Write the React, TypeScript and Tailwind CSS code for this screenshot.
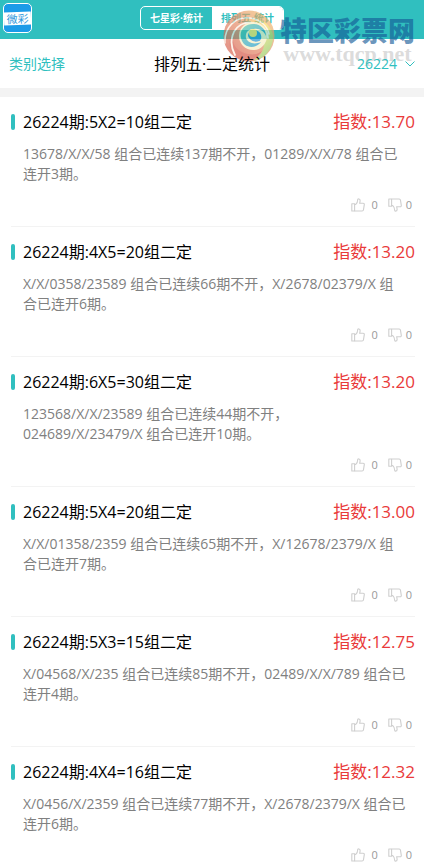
const plans = [
  { title: '26224期:5X2=10组二定', index: '13.70', lines: ['13678/X/X/58 组合已连续137期不开，01289/X/X/78 组合已', '连开3期。'] },
  { title: '26224期:4X5=20组二定', index: '13.20', lines: ['X/X/0358/23589 组合已连续66期不开，X/2678/02379/X 组', '合已连开6期。'] },
  { title: '26224期:6X5=30组二定', index: '13.20', lines: ['123568/X/X/23589 组合已连续44期不开，', '024689/X/23479/X 组合已连开10期。'] },
  { title: '26224期:5X4=20组二定', index: '13.00', lines: ['X/X/01358/2359 组合已连续65期不开，X/12678/2379/X 组', '合已连开7期。'] },
  { title: '26224期:5X3=15组二定', index: '12.75', lines: ['X/04568/X/235 组合已连续85期不开，02489/X/X/789 组合已', '连开4期。'] },
  { title: '26224期:4X4=16组二定', index: '12.32', lines: ['X/0456/X/2359 组合已连续77期不开，X/2678/2379/X 组合已', '连开6期。'] },
];

function ThumbUp() {
  return (
    <svg viewBox="0 0 14 14" className="h-3.5 w-3.5" fill="none" stroke="#cfcfcf" strokeWidth="1.1" strokeLinejoin="round">
      <path d="M.8 5.800h2.800v7.200H.8z" />
      <path d="M3.600 6.400h1.200C6 5.500 6.600 4 6.700 1.700c0-1.100 2.300-1.200 2.400.7 0 1.100-.2 2-.5 2.900h3.500c.9 0 1.300.6 1.200 1.300l-.8 5.100c-.1.800-.6 1.300-1.400 1.300H3.600" />
    </svg>
  );
}

function ThumbDown() {
  return (
    <svg viewBox="0 0 14 14" className="h-3.5 w-3.5" fill="none" stroke="#cfcfcf" strokeWidth="1.1" strokeLinejoin="round">
      <path d="M.8 8.200h2.800V1H.8z" />
      <path d="M3.600 7.600h1.200c1.200.9 1.800 2.400 1.900 4.700 0 1.100 2.300 1.200 2.400-.7 0-1.100-.2-2-.5-2.900h3.500c.9 0 1.300-.6 1.200-1.300l-.8-5.100C12.400 1.500 11.900 1 11.100 1H3.600" />
    </svg>
  );
}

function AppLogo() {
  return (
    <a
      href="#home"
      className="flex h-[30px] w-[29px] flex-col justify-center overflow-hidden rounded-[5px] border border-white bg-[#1b9be8]"
    >
      <span className="-rotate-2 bg-white text-center text-[11px] leading-[13px] text-[#2d97dc]">微彩</span>
    </a>
  );
}

function Swirl() {
  return (
    <svg viewBox="0 0 52 52" className="h-[52px] w-[52px] opacity-65">
      <defs>
        <linearGradient id="swirl-base" x1="1" y1="0" x2="0" y2="1">
          <stop offset="0" stopColor="#f3c76a" />
          <stop offset=".45" stopColor="#e58a60" />
          <stop offset="1" stopColor="#d04a40" />
        </linearGradient>
        <linearGradient id="swirl-gold" x1="0" y1="0" x2=".6" y2="1">
          <stop offset="0" stopColor="#ee9a5c" />
          <stop offset=".45" stopColor="#f8da5a" />
          <stop offset="1" stopColor="#8cc860" />
        </linearGradient>
        <linearGradient id="swirl-core" x1="0" y1="0" x2="1" y2="1">
          <stop offset="0" stopColor="#4fc09a" />
          <stop offset="1" stopColor="#0f8fd0" />
        </linearGradient>
      </defs>
      <circle cx="26" cy="26" r="25.500" fill="url(#swirl-base)" />
      {/* gold blade sweeping over the top and down the right side */}
      <path d="M20 10C33 4 47 12 50 25c1 13-8 24-20 26 9-6 13-14 10-23-3-10-11-16-20-18z" fill="url(#swirl-gold)" />
      {/* red blade running under the core */}
      <path d="M11 22c-4 12 3 20 14 22 6 1 10 0 14-3-5 8-14 11-22 8C6 44 3 31 11 22z" fill="#d4503f" />
      <g fill="none" stroke="#fdeee0" strokeLinecap="round">
        <path d="M2 33C1 18 12 6 27 8c9 1 17 7 19 16" strokeWidth="1.500" />
        <path d="M12 45C5 32 9 17 22 13c12-2 22 4 23 15" strokeWidth="1.800" />
      </g>
      {/* teal core, pale spiral and gold eye */}
      <circle cx="30" cy="26" r="14" fill="#f6edc0" />
      <path d="M18 28c-2-8 4-14 12-14 7 0 13 5 13 12-2-5-7-8-12-7-6 0-9 4-8 9 2 5 8 7 15 4-6 8-18 6-20-4z" fill="url(#swirl-core)" />
      <path d="M25 26c0-4 3-6 7-6 5 1 7 5 6 9-2 4-10 4-13-3z" fill="#1a8fce" />
      <circle cx="30" cy="23" r="4" fill="#f9e05a" />
    </svg>
  );
}

function Watermark() {
  return (
    <div className="pointer-events-none absolute top-2.5 right-[9px] flex items-start gap-[5px]">
      <Swirl />
      <div className="flex flex-col items-center pt-1">
        <span className="text-[27px] leading-[34px] font-black text-[#145a96]/65">特区彩票网</span>
        <span className="-mt-1 font-['Liberation_Serif',serif] text-[22px] leading-5 font-bold text-[#c8c8c8]/65">
          www.tqcp.net
        </span>
      </div>
    </div>
  );
}

export default function App() {
  return (
    <div className="relative overflow-hidden bg-white font-['Open_Sans','Noto_Sans_CJK_SC',sans-serif] text-black">
      <header className="grid h-[39px] grid-cols-[1fr_auto_1fr] items-center bg-[#30bfbf] px-[3px] pb-[3px]">
        <AppLogo />
        <nav className="flex h-6 w-36 overflow-hidden rounded-[5px] border border-white text-[10px] font-bold">
          <button type="button" className="flex-1 text-white">七星彩·统计</button>
          <button type="button" className="flex-1 bg-white text-[#30bfbf]">排列五·统计</button>
        </nav>
      </header>

      <Watermark />

      <div className="relative grid h-[49px] grid-cols-[1fr_auto_1fr] items-center px-[9px] text-[14px] text-[#30bfbf]">
        <button type="button" className="text-left">类别选择</button>
        <h1 className="text-[16px] text-black">排列五·二定统计</h1>
        <button type="button" className="flex items-center justify-end gap-2">
          26224
          <svg viewBox="0 0 10 6" className="h-1.5 w-2.5" fill="none" stroke="currentColor">
            <path d="M.5.5 5 5 9.500.5" />
          </svg>
        </button>
      </div>
      <div className="h-[9px] bg-[#f3f3f3]" />

      <main className="pr-[9px] pl-[11px]">
        {plans.map((plan) => (
          <article key={plan.title} className="border-b border-[#f3f3f3] pt-[13px] pb-[13px] last:border-0 last:pb-0">
            <div className="flex h-6 items-center">
              <span className="h-4 w-1 rounded-xs bg-[#30bfbf]" />
              <h2 className="ml-2 flex-1 text-[16px] leading-6">{plan.title}</h2>
              <span className="text-[17px] leading-6 text-[#e93a3a]">指数:{plan.index}</span>
            </div>
            <p className="mt-2.5 ml-3 text-[14px] leading-5 text-[#808080]">
              {plan.lines[0]}
              <br />
              {plan.lines[1]}
            </p>
            <div className="mt-[13px] flex justify-end gap-2.5 pr-[3px] text-[11px] leading-4 text-[#999]">
              <button type="button" aria-label="赞" className="flex items-center gap-1.5">
                <ThumbUp />0
              </button>
              <button type="button" aria-label="踩" className="flex items-center gap-1">
                <ThumbDown />0
              </button>
            </div>
          </article>
        ))}
      </main>
    </div>
  );
}
